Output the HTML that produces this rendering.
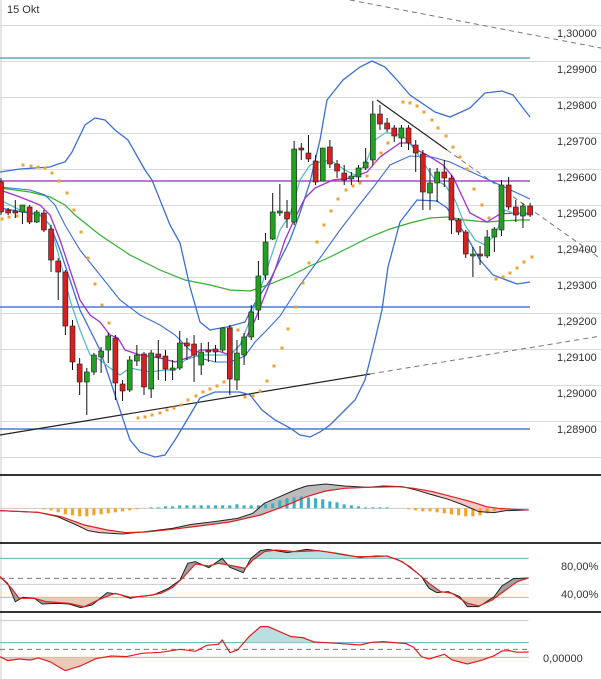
<!DOCTYPE html>
<html><head><meta charset="utf-8"><style>
html,body{margin:0;padding:0;background:#fff;width:601px;height:679px;overflow:hidden}
svg{display:block}
text{font-family:"Liberation Sans",Arial,sans-serif;font-size:11px;fill:#333}
</style></head><body>
<svg id="s" width="601" height="679" viewBox="0 0 601 679" xmlns="http://www.w3.org/2000/svg">
<defs>
<clipPath id="macdA"><rect x="0" y="0" width="390" height="300"/><rect x="1000" y="0" width="400" height="300"/></clipPath>
<clipPath id="macdB"><rect x="390" y="0" width="610" height="300"/></clipPath>
<clipPath id="stU"><rect x="0" y="200" width="1400" height="95"/></clipPath>
<clipPath id="stL"><rect x="0" y="412" width="1400" height="60"/></clipPath>
<clipPath id="lU"><rect x="0" y="470" width="1400" height="78"/></clipPath>
<clipPath id="lL"><rect x="0" y="592" width="1400" height="70"/></clipPath>
</defs>
<rect x="0" y="0" width="601" height="679" fill="#fff"/>
<line x1="1" y1="0" x2="1" y2="679" stroke="#ccc"/>
<text x="7" y="13">15 Okt</text>
<g id="grid" stroke="#d9d9d9" stroke-width="1"></g>
<g id="labels"></g>
<!-- horizontal levels -->
<line x1="0" y1="58" x2="530" y2="58" stroke="#3aa0a0" stroke-width="1.2"/>
<line x1="0" y1="181" x2="530" y2="181" stroke="#a020c0" stroke-width="1.2"/>
<line x1="0" y1="307" x2="530" y2="307" stroke="#2a62c8" stroke-width="1.2"/>
<line x1="0" y1="429" x2="530" y2="429" stroke="#2a62c8" stroke-width="1.2"/>
<!-- trendlines -->
<line x1="350" y1="0" x2="601" y2="48" stroke="#777" stroke-dasharray="5,4"/>
<line x1="0" y1="435" x2="370" y2="374" stroke="#222" stroke-width="1.2"/>
<line x1="370" y1="374" x2="601" y2="336" stroke="#777" stroke-dasharray="5,4"/>
<line x1="377" y1="100" x2="447" y2="150" stroke="#222" stroke-width="1.2"/>
<line x1="447" y1="150" x2="601" y2="259" stroke="#777" stroke-dasharray="5,4"/>
<!-- indicators -->
<polyline fill="none" stroke="#30b030" stroke-width="1.2" points="0,188 30,192 50,197 65,205 75,215 100,235 130,255 160,270 185,280 210,285 230,290 250,291 265,286 290,276 310,266 330,257 350,247 370,237 390,229 410,223 430,218 447,217 465,220 487,222 500,221 520,220 530,220"/>
<polyline fill="none" stroke="#3a6fd8" stroke-width="1.3" points="0,172 20,169 50,167 58,164 65,162 72,152 85,125 95,118 105,120 115,130 128,140 145,170 152,180 160,200 170,225 180,243 190,287 200,322 210,330 215,329 227,327 245,322 252,308 262,292 270,280 280,260 290,240 300,213 310,182 320,140 327,100 335,90 343,80 360,67 372,61 385,67 397,80 410,95 435,112 450,117 470,108 485,93 502,91 513,95 530,117"/>
<polyline fill="none" stroke="#3a6fd8" stroke-width="1.3" points="0,208 40,215 50,225 60,250 70,280 80,310 90,330 100,350 110,380 120,410 130,440 140,452 155,457 165,455 175,440 190,415 200,398 215,392 240,392 250,395 262,410 275,420 290,428 300,435 310,437 320,432 330,425 340,415 355,400 365,380 375,340 382,310 388,267 400,222 417,200 437,201 447,208 467,237 480,260 493,275 517,284 530,282"/>
<polyline fill="none" stroke="#3a6fd8" stroke-width="1.1" points="0,187 30,190 45,195 55,205 65,225 80,250 100,275 120,300 140,315 160,325 175,335 190,350 200,358 215,362 230,362 245,356 255,342 265,332 280,316 300,285 320,258 340,230 360,204 375,185 390,165 410,156 432,157 450,162 467,170 500,185 530,199"/>
<polyline fill="none" stroke="#a030d0" stroke-width="1.3" points="0,190 20,197 40,205 50,215 60,240 70,270 80,300 90,315 100,322 110,335 118,338 125,350 140,355 160,358 175,362 190,357 200,350 215,350 230,355 245,340 255,320 265,295 275,270 285,240 295,218 305,198 315,188 333,180 350,178 367,172 380,157 400,143 410,143 417,150 427,155 443,165 453,177 470,213 487,222 500,214 515,213 530,214"/>
<polyline fill="none" stroke="#50b8c4" stroke-width="1.2" points="0,200 20,210 40,215 50,225 60,260 70,300 80,330 90,355 100,360 110,368 120,375 130,368 140,370 150,372 165,370 175,370 185,360 200,355 215,355 230,355 240,345 250,320 260,290 270,260 280,230 290,215 300,180 310,165 320,162 330,160 345,170 355,175 365,165 375,140 385,133 395,133 405,138 415,150 425,165 435,180 445,185 455,200 465,225 475,240 485,245 495,235 505,210 515,214 525,213 530,213"/>
<g id="sar" fill="#f0a030"></g>
<g id="candles"></g>
<!-- panel separators -->
<rect x="0" y="474" width="601" height="2" fill="#333"/>
<rect x="0" y="542" width="601" height="2" fill="#333"/>
<rect x="0" y="611" width="601" height="2" fill="#333"/>
<!-- MACD -->
<g transform="translate(0,460) scale(0.3831,0.3333)">
<line x1="0" y1="145" x2="1380" y2="145" stroke="#ccc" vector-effect="non-scaling-stroke"/>
<polygon clip-path="url(#macdA)" fill="#f6c4c4" points="0,152 100,157 150,170 200,195 230,212 260,218 320,222 380,215 450,205 500,193 560,185 620,175 660,160 690,130 730,110 770,90 800,78 850,72 900,78 960,82 1000,78 1050,80 1080,88 1130,105 1170,118 1210,135 1250,155 1290,158 1320,152 1380,150 1340,148 1300,145 1270,140 1230,125 1180,110 1130,95 1080,85 1040,80 960,82 900,85 850,93 800,110 760,130 720,148 680,165 600,186 520,198 450,208 380,216 330,218 280,210 220,195 160,170 100,157"/>
<polygon clip-path="url(#macdB)" fill="#bcbcbc" points="0,152 100,157 150,170 200,195 230,212 260,218 320,222 380,215 450,205 500,193 560,185 620,175 660,160 690,130 730,110 770,90 800,78 850,72 900,78 960,82 1000,78 1050,80 1080,88 1130,105 1170,118 1210,135 1250,155 1290,158 1320,152 1380,150 1340,148 1300,145 1270,140 1230,125 1180,110 1130,95 1080,85 1040,80 960,82 900,85 850,93 800,110 760,130 720,148 680,165 600,186 520,198 450,208 380,216 330,218 280,210 220,195 160,170 100,157"/>
<g id="hist"></g>
<polyline fill="none" stroke="#222" stroke-width="1" vector-effect="non-scaling-stroke" points="0,152 100,157 150,170 200,195 230,212 260,218 320,222 380,215 450,205 500,193 560,185 620,175 660,160 690,130 730,110 770,90 800,78 850,72 900,78 960,82 1000,78 1050,80 1080,88 1130,105 1170,118 1210,135 1250,155 1290,158 1320,152 1380,150"/>
<polyline fill="none" stroke="#e02020" stroke-width="1.2" vector-effect="non-scaling-stroke" points="0,152 100,157 160,170 220,195 280,210 330,218 380,216 450,208 520,198 600,186 680,165 720,148 760,130 800,110 850,93 900,85 960,82 1040,80 1080,85 1130,95 1180,110 1230,125 1270,140 1300,145 1340,148 1380,150"/>
</g>
<!-- Stochastic -->
<g transform="translate(0,460) scale(0.3831,0.3333)">
<line x1="0" y1="295" x2="1380" y2="295" stroke="#5aa8b0" vector-effect="non-scaling-stroke"/>
<line x1="0" y1="355" x2="1380" y2="355" stroke="#777" stroke-dasharray="5,4" vector-effect="non-scaling-stroke"/>
<line x1="0" y1="373" x2="1380" y2="373" stroke="#ccc" vector-effect="non-scaling-stroke"/>
<line x1="0" y1="412" x2="1380" y2="412" stroke="#d8a880" vector-effect="non-scaling-stroke"/>
<polygon clip-path="url(#stU)" fill="#b8e0e0" points="0,350 20,370 40,425 60,412 90,415 110,432 150,430 180,432 210,443 240,435 280,398 310,403 340,415 360,410 400,405 440,385 470,360 490,310 510,305 545,323 580,295 600,322 635,338 655,295 680,272 700,268 750,278 800,268 850,275 900,285 940,292 980,288 1010,288 1040,300 1070,320 1100,350 1120,385 1140,398 1170,395 1200,410 1220,440 1250,440 1290,410 1310,378 1340,356 1380,354 1380,295 0,295"/>
<polygon clip-path="url(#stL)" fill="#e8cbb8" points="0,350 30,385 50,415 90,415 120,425 180,430 220,440 260,418 300,400 340,412 380,408 420,400 450,383 480,350 510,312 545,318 570,310 610,318 640,325 660,300 690,275 720,270 770,275 830,272 880,280 930,290 980,290 1010,288 1050,305 1090,340 1120,370 1150,395 1180,400 1220,430 1250,438 1285,420 1320,390 1350,365 1380,354 1380,412 0,412"/>
<polygon fill="#8a8a8a" fill-opacity="0.8" points="0,350 20,370 40,425 60,412 90,415 110,432 150,430 180,432 210,443 240,435 280,398 310,403 340,415 360,410 400,405 440,385 470,360 490,310 510,305 545,323 580,295 600,322 635,338 655,295 680,272 700,268 750,278 800,268 850,275 900,285 940,292 980,288 1010,288 1040,300 1070,320 1100,350 1120,385 1140,398 1170,395 1200,410 1220,440 1250,440 1290,410 1310,378 1340,356 1380,354 1350,365 1320,390 1285,420 1250,438 1220,430 1180,400 1150,395 1120,370 1090,340 1050,305 1010,288 980,290 930,290 880,280 830,272 770,275 720,270 690,275 660,300 640,325 610,318 570,310 545,318 510,312 480,350 450,383 420,400 380,408 340,412 300,400 260,418 220,440 180,430 120,425 90,415 50,415 30,385"/>
<polyline fill="none" stroke="#222" vector-effect="non-scaling-stroke" points="0,350 20,370 40,425 60,412 90,415 110,432 150,430 180,432 210,443 240,435 280,398 310,403 340,415 360,410 400,405 440,385 470,360 490,310 510,305 545,323 580,295 600,322 635,338 655,295 680,272 700,268 750,278 800,268 850,275 900,285 940,292 980,288 1010,288 1040,300 1070,320 1100,350 1120,385 1140,398 1170,395 1200,410 1220,440 1250,440 1290,410 1310,378 1340,356 1380,354"/>
<polyline fill="none" stroke="#e02020" stroke-width="1.2" vector-effect="non-scaling-stroke" points="0,350 30,385 50,415 90,415 120,425 180,430 220,440 260,418 300,400 340,412 380,408 420,400 450,383 480,350 510,312 545,318 570,310 610,318 640,325 660,300 690,275 720,270 770,275 830,272 880,280 930,290 980,290 1010,288 1050,305 1090,340 1120,370 1150,395 1180,400 1220,430 1250,438 1285,420 1320,390 1350,365 1380,354"/>
</g>
<!-- last panel -->
<g transform="translate(0,460) scale(0.3831,0.3333)">
<line x1="0" y1="482" x2="1380" y2="482" stroke="#ccc" vector-effect="non-scaling-stroke"/>
<line x1="0" y1="548" x2="1380" y2="548" stroke="#5aa8b0" vector-effect="non-scaling-stroke"/>
<line x1="0" y1="568" x2="1380" y2="568" stroke="#777" stroke-dasharray="5,4" vector-effect="non-scaling-stroke"/>
<line x1="0" y1="592" x2="1380" y2="592" stroke="#d8a880" vector-effect="non-scaling-stroke"/>
<polygon clip-path="url(#lU)" fill="#b8e0e0" points="0,590 20,602 50,597 80,600 100,594 130,605 170,632 210,618 250,596 290,588 330,590 370,580 420,577 470,568 510,574 540,556 570,553 580,540 600,578 620,570 650,530 680,500 700,500 740,520 760,530 790,533 820,546 880,550 940,555 970,547 1000,545 1060,551 1080,562 1100,590 1120,597 1160,583 1180,600 1220,612 1260,600 1290,587 1310,573 1330,572 1350,577 1380,576 1380,548 0,548"/>
<polygon clip-path="url(#lL)" fill="#e8cbb8" points="0,590 20,602 50,597 80,600 100,594 130,605 170,632 210,618 250,596 290,588 330,590 370,580 420,577 470,568 510,574 540,556 570,553 580,540 600,578 620,570 650,530 680,500 700,500 740,520 760,530 790,533 820,546 880,550 940,555 970,547 1000,545 1060,551 1080,562 1100,590 1120,597 1160,583 1180,600 1220,612 1260,600 1290,587 1310,573 1330,572 1350,577 1380,576 1380,592 0,592"/>
<polyline fill="none" stroke="#e02020" stroke-width="1.2" vector-effect="non-scaling-stroke" points="0,590 20,602 50,597 80,600 100,594 130,605 170,632 210,618 250,596 290,588 330,590 370,580 420,577 470,568 510,574 540,556 570,553 580,540 600,578 620,570 650,530 680,500 700,500 740,520 760,530 790,533 820,546 880,550 940,555 970,547 1000,545 1060,551 1080,562 1100,590 1120,597 1160,583 1180,600 1220,612 1260,600 1290,587 1310,573 1330,572 1350,577 1380,576"/>
</g>
<text x="561" y="570">80,00%</text>
<text x="561" y="598">40,00%</text>
<text x="543" y="662">0,00000</text>
</svg>
<script>
(function(){
var NS="http://www.w3.org/2000/svg";
function el(p,t,a){var e=document.createElementNS(NS,t);for(var k in a)e.setAttribute(k,a[k]);p.appendChild(e);return e;}
var g=document.getElementById('grid'),lb=document.getElementById('labels');
var labs=["1,30000","1,29900","1,29800","1,29700","1,29600","1,29500","1,29400","1,29300","1,29200","1,29100","1,29000","1,28900"];
for(var k=0;k<13;k++){var y=25+36*k;el(g,'line',{x1:0,y1:y+0.5,x2:601,y2:y+0.5});
 if(k<12){var t=el(lb,'text',{x:557,y:y+12});t.textContent=labs[k];}}
var C=[[182,212,178,215],[210,213,208,215],[211,213,200,218],[212,205,205,224],[207,222,205,224],[222,212,210,223],[213,230,210,232],[229,260,225,272],[261,272,258,300],[272,326,270,335],[326,362,320,370],[364,382,358,395],[382,372,368,415],[372,355,353,375],[357,351,347,373],[350,336,333,363],[338,383,335,400],[384,391,380,401],[390,360,356,392],[361,355,345,366],[354,387,352,395],[389,353,350,398],[354,357,340,380],[356,369,350,381],[370,368,360,380],[368,343,331,370],[343,346,338,360],[344,355,335,382],[365,352,343,375],[350,352,342,362],[349,352,345,362],[350,328,327,352],[328,379,325,395],[380,353,340,390],[355,337,333,365],[337,312,305,340],[310,276,261,320],[275,242,233,280],[239,212,193,240],[213,211,184,216],[212,219,200,228],[222,149,141,225],[148,150,143,160],[153,159,135,162],[161,182,155,185],[181,148,148,181],[147,164,140,168],[164,171,160,178],[173,180,165,185],[179,176,172,185],[177,168,165,182],[168,162,148,170],[160,114,101,165],[114,124,105,130],[123,129,118,132],[128,136,125,142],[138,128,125,147],[128,143,125,150],[145,153,140,172],[154,192,150,210],[193,183,168,210],[183,172,168,202],[172,178,160,187],[178,220,175,234],[220,232,218,235],[232,254,230,258],[256,254,247,277],[254,256,246,265],[256,237,230,258],[237,229,227,252],[230,185,180,236],[185,207,177,210],[207,215,200,222],[216,206,203,228],[206,215,203,217]];
var cg=document.getElementById('candles');
C.forEach(function(c,i){var x=1+7.15*i;var up=c[1]<c[0];
 el(cg,'line',{x1:x,y1:c[2],x2:x,y2:c[3],stroke:'#111','stroke-width':1});
 var t=Math.min(c[0],c[1]),h=Math.max(1.5,Math.abs(c[1]-c[0]));
 el(cg,'rect',{x:x-2.5,y:t,width:5,height:h,fill:up?'#22a022':'#d42020',stroke:'#222','stroke-width':0.6});});
var S=[[2,219],[9,217],[17,216],[23,165],[31,166],[38,167],[45,168],[52,173],[59,181],[67,193],[74,210],[81,232],[88,258],[95,284],[102,305],[109,323],[138,418],[145,417],[152,415],[160,413],[167,410],[174,408],[181,405],[188,400],[196,396],[203,392],[210,389],[217,386],[224,382],[231,328],[238,330],[245,397],[253,396],[260,391],[267,381],[274,366],[282,348],[288,329],[296,307],[303,283],[309,263],[317,242],[324,225],[331,211],[338,199],[346,190],[353,186],[360,183],[367,176],[374,163],[381,153],[388,143],[396,135],[403,102],[410,103],[417,106],[424,112],[432,120],[438,128],[446,136],[453,147],[460,157],[467,169],[474,189],[482,205],[489,218],[496,279],[503,277],[510,273],[517,268],[524,262],[532,257]];
var sg=document.getElementById('sar');S.forEach(function(p){el(sg,'rect',{x:p[0]-1.5,y:p[1]-1.5,width:3,height:3});});
var hg=document.getElementById('hist');
var O1={6:1,7:2,8:4,9:6,10:7,11:8,12:8,13:7,14:6,15:5,16:4,17:3,18:2,19:1};
var T={21:1,22:1,23:2,24:2,25:3,26:3,27:3,28:3,29:3,30:3,31:3,32:3,33:4,34:3,35:3,36:3,37:4,38:5,39:8,40:10,41:11,42:12,43:11,44:10,45:9,46:7,47:6,48:4,49:3,50:2,51:1,52:1,53:1,54:1};
var O2={57:1,58:2,59:3,60:3,61:4,62:5,63:6,64:7,65:8,66:8,67:7,68:5,69:3,70:2,71:1};
function bars(o,col,down){for(var i in o){var x=(1+7.15*i)*2.61;var h=o[i]*3;el(hg,'rect',{x:x-4,y:down?145:145-h,width:8,height:h,fill:col});}}
bars(O1,'#f5a020',true);bars(T,'#3ab0c0',false);bars(O2,'#f5a020',true);
})();
</script>
</body></html>
